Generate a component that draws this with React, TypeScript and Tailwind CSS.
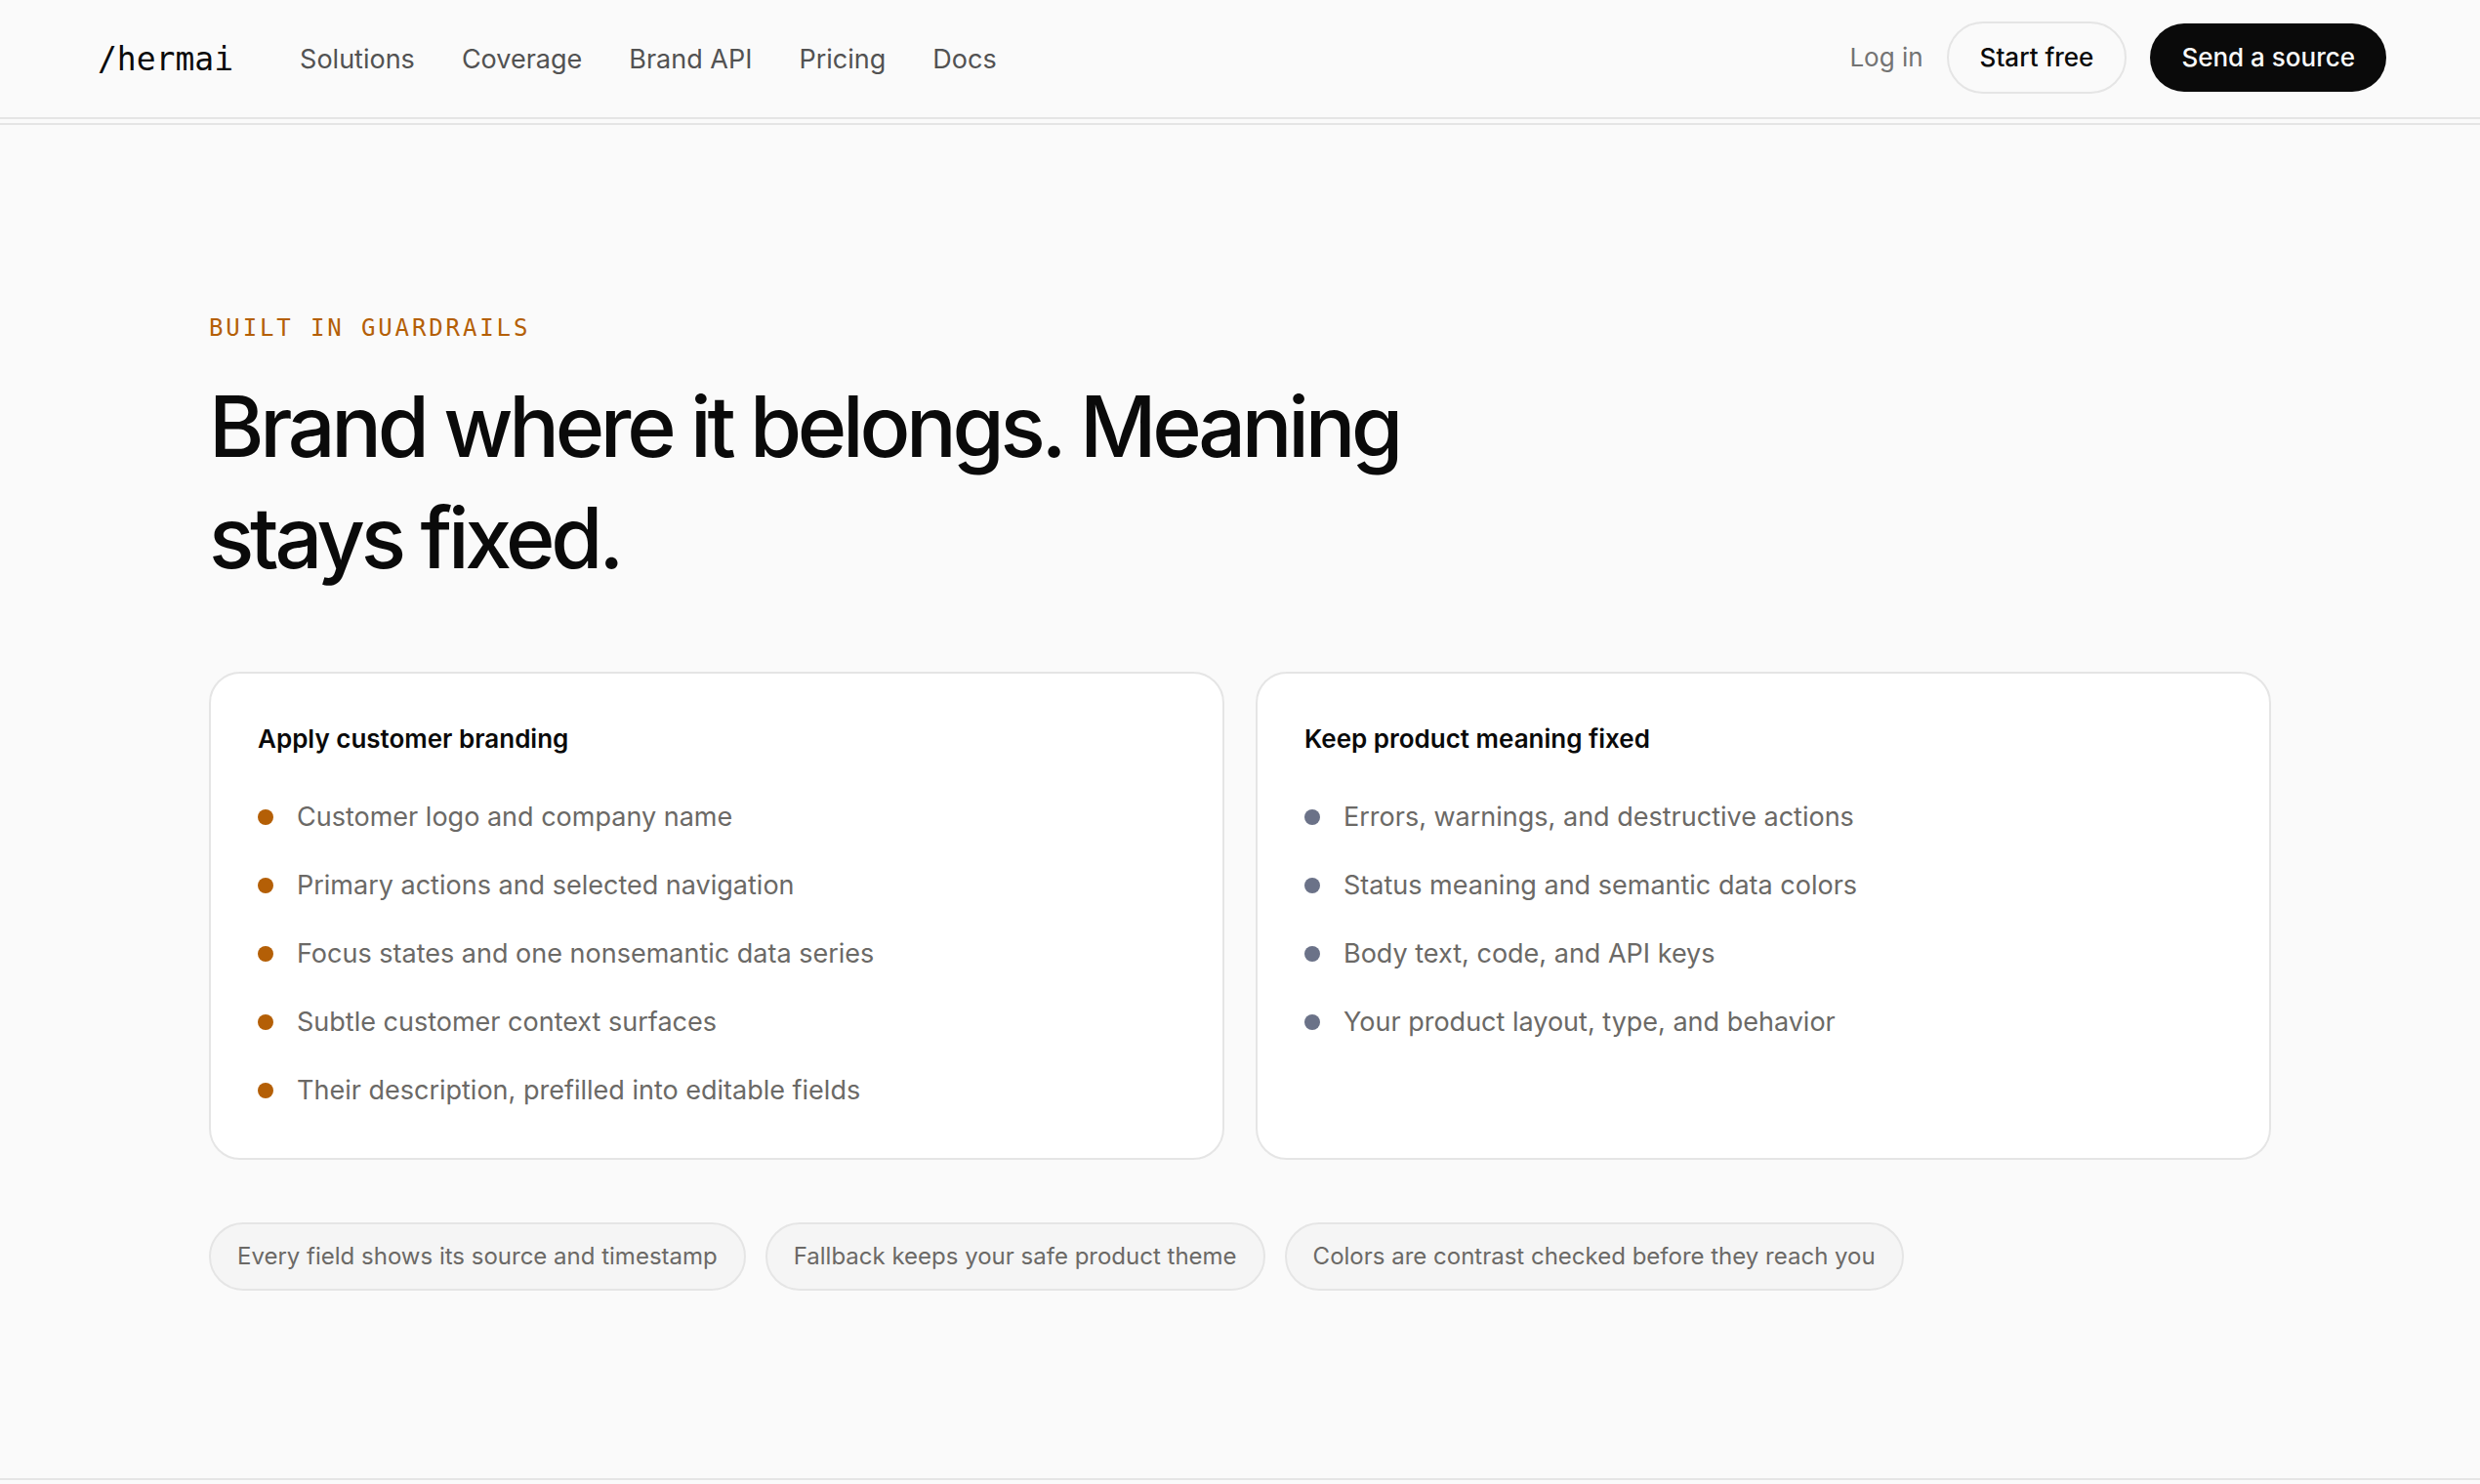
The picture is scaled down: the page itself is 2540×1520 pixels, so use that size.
const navLinks = ["Solutions", "Coverage", "Brand API", "Pricing", "Docs"];

const cards = [
    {
        title: "Apply customer branding",
        dot: "bg-[#b45f06]",
        items: [
            "Customer logo and company name",
            "Primary actions and selected navigation",
            "Focus states and one nonsemantic data series",
            "Subtle customer context surfaces",
            "Their description, prefilled into editable fields",
        ],
    },
    {
        title: "Keep product meaning fixed",
        dot: "bg-[#6b7288]",
        items: [
            "Errors, warnings, and destructive actions",
            "Status meaning and semantic data colors",
            "Body text, code, and API keys",
            "Your product layout, type, and behavior",
        ],
    },
];

const notes = [
    "Every field shows its source and timestamp",
    "Fallback keeps your safe product theme",
    "Colors are contrast checked before they reach you",
];

function Header() {
    return (
        <header className="flex h-[122px] items-center justify-between border-b-2 border-[#e5e5e5] pr-24 pl-25">
            <div className="flex items-center gap-17 pt-0.5">
                <a href="#" className="font-['DejaVu_Sans_Mono',monospace] text-[33px] leading-10 text-[#0a0a0a]">
                    /hermai
                </a>
                <nav className="flex items-center gap-12 text-[27px] leading-10 text-[#525252]">
                    {navLinks.map((link) => (
                        <a key={link} href="#">
                            {link}
                        </a>
                    ))}
                </nav>
            </div>
            <div className="flex items-center gap-6 pb-0.5 text-[26px] leading-[38px]">
                <a href="#" className="text-[#737373]">
                    Log in
                </a>
                <button className="rounded-full border-2 border-[#e5e5e5] px-8 py-4 font-medium text-[#0a0a0a]">
                    Start free
                </button>
                <button className="rounded-full bg-[#0a0a0a] px-8 py-4 font-medium text-[#fafafa]">
                    Send a source
                </button>
            </div>
        </header>
    );
}

function Card({ title, dot, items }: { title: string; dot: string; items: string[] }) {
    return (
        <div className="rounded-[32px] border-2 border-[#e5e5e5] bg-white px-12 pt-12 pb-[46px]">
            <h3 className="mb-[38px] text-[26px] leading-[38px] font-semibold text-[#0a0a0a]">{title}</h3>
            <ul className="flex flex-col gap-6">
                {items.map((item) => (
                    <li key={item} className="flex items-center gap-6 text-[27px] leading-[46px] text-[#6b6966]">
                        <span className={`size-4 shrink-0 rounded-full ${dot}`}></span>
                        {item}
                    </li>
                ))}
            </ul>
        </div>
    );
}

export default function App() {
    return (
        <div className="min-h-screen bg-[#fafafa] font-['Inter',sans-serif]">
            <Header />
            <main className="mt-1 border-y-2 border-[#e5e5e5] px-24 py-48">
                <div className="mx-auto max-w-[2112px]">
                    <p className="mb-7 font-['DejaVu_Sans_Mono',monospace] text-2xl leading-8 tracking-[0.12em] text-[#b45f06] uppercase">
                        Built in guardrails
                    </p>
                    <h2 className="max-w-[1360px] text-[86px] leading-[114px] font-medium tracking-tighter text-[#0a0a0a]">
                        Brand where it belongs. Meaning stays fixed.
                    </h2>
                    <div className="mt-20 grid grid-cols-2 gap-8">
                        {cards.map((card) => (
                            <Card key={card.title} {...card} />
                        ))}
                    </div>
                    <div className="mt-16 flex flex-wrap gap-5">
                        {notes.map((note) => (
                            <span
                                key={note}
                                className="rounded-full border-2 border-[#e5e5e5] bg-[#f5f5f5] px-[27px] py-4 text-2xl leading-[34px] text-[#6b6966]"
                            >
                                {note}
                            </span>
                        ))}
                    </div>
                </div>
            </main>
        </div>
    );
}
